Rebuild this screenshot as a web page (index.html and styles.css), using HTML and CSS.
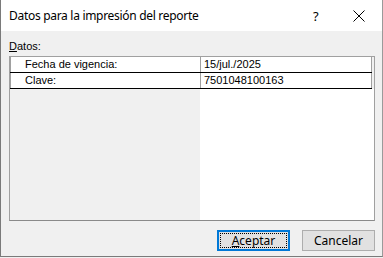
FILE: index.html
```html
<!DOCTYPE html>
<html lang="es">
<head>
    <meta charset="UTF-8">
    <title>Datos para la impresión del reporte</title>
    <link rel="stylesheet" href="styles.css">
</head>
<body>
    <div class="window">
        <div class="titlebar">
            <span class="title">Datos para la impresión del reporte</span>
            <span class="help">?</span>
            <span class="close">
                <svg width="12" height="12" viewBox="0 0 12 12"><path d="M0.5 0.5 L11.5 11.5 M11.5 0.5 L0.5 11.5" stroke="#000" stroke-width="1" fill="none"/></svg>
            </span>
        </div>
        <div class="content">
            <div class="caption"><u>D</u>atos:</div>
            <div class="grid">
                <div class="row">
                    <div class="cell name">Fecha de vigencia:</div>
                    <div class="cell value">15/jul./2025</div>
                </div>
                <div class="row">
                    <div class="cell name">Clave:</div>
                    <div class="cell value">7501048100163</div>
                </div>
                <div class="filler">
                    <div class="filler-left"></div>
                    <div class="filler-right"></div>
                </div>
            </div>
            <div class="buttons">
                <button class="btn default"><span class="focus"><u>A</u>ceptar</span></button>
                <button class="btn">Cancelar</button>
            </div>
        </div>
    </div>
</body>
</html>
```

FILE: styles.css
```css
body {
    margin: 0;
    width: 383px;
    height: 258px;
    background-color: #f0f0f0;
    font-family: "Noto Sans", "Liberation Sans", sans-serif;
    overflow: hidden;
}

.window {
    width: 381px;
    height: 256px;
    border: 1px solid #7a7a7a;
    border-top: none;
    border-right-color: #9a9a9a;
    background-color: #f0f0f0;
    display: flex;
    flex-direction: column;
}

.titlebar {
    height: 31px;
    background-color: #fff;
    display: flex;
    align-items: center;
    font-size: 12px;
    color: #000;
}

.title {
    padding-left: 8px;
    flex: 1;
    letter-spacing: -0.3px;
}

.help {
    width: 14px;
    font-size: 13px;
    margin-right: 26px;
}

.close {
    width: 12px;
    height: 12px;
    margin-right: 17px;
    display: flex;
}

.content {
    flex: 1;
    padding: 9px 7px 0 8px;
    display: flex;
    flex-direction: column;
}

.caption {
    font-family: "Liberation Sans", Arial, sans-serif;
    font-size: 11px;
    height: 16px;
    line-height: 13px;
}

.grid {
    height: 163px;
    border: 1px solid #a0a0a0;
    border-bottom-color: #8a8a8a;
    display: flex;
    flex-direction: column;
}

.row {
    display: flex;
    height: 15px;
    border-bottom: 1px solid #000;
    margin-right: 2px;
}

.cell {
    font-family: "Liberation Sans", Arial, sans-serif;
    font-size: 11px;
    line-height: 15px;
    color: #000;
    background-color: #fff;
}

.name {
    width: 175px;
    padding-left: 14px;
    border-left: 1px solid #a0a0a0;
    border-right: 1px solid #a0a0a0;
}

.value {
    flex: 1;
    padding-left: 3px;
    border-right: 1px solid #a0a0a0;
}

.filler {
    flex: 1;
    display: flex;
}

.filler-left {
    width: 190px;
    background-color: #f0f0f0;
}

.filler-right {
    flex: 1;
    background-color: #fff;
}

.buttons {
    display: flex;
    justify-content: flex-end;
    gap: 12px;
    margin-top: 9px;
}

.btn {
    width: 73px;
    height: 21px;
    background-color: #e1e1e1;
    border: 1px solid #adadad;
    font-family: "Noto Sans", "Liberation Sans", sans-serif;
    font-size: 12px;
    color: #000;
    padding: 0;
    display: flex;
    align-items: center;
    justify-content: center;
}

.default {
    border: 2px solid #0078d7;
    padding: 1px;
}

.focus {
    flex: 1;
    align-self: stretch;
    border: 1px dotted #000;
    display: flex;
    align-items: center;
    justify-content: center;
}
```
